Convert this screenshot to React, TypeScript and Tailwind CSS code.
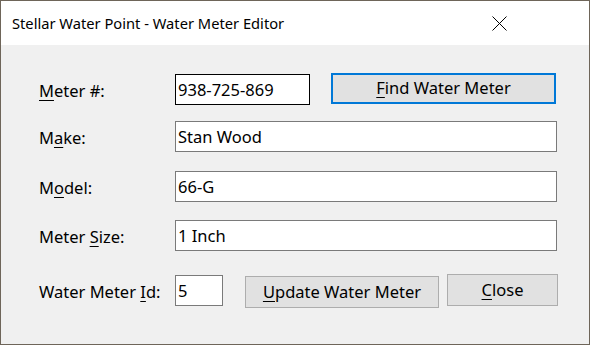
import React from 'react';

const font = { fontFamily: '"Noto Sans", "Open Sans", Arial, sans-serif' };

function Label({ pre, key_, post }: { pre: string; key_: string; post: string }) {
  return (
    <div className="h-[31px] w-[136px] shrink-0 pt-[1px] text-[16.5px] leading-[31px] text-black">
      {pre}
      <span className="underline underline-offset-[3px]">{key_}</span>
      {post}
    </div>
  );
}

function Field({ value, className = '' }: { value: string; className?: string }) {
  return (
    <div
      className={`h-[31px] shrink-0 border border-[#7a7a7a] bg-white pl-[2px] text-[16.5px] leading-[30px] text-black ${className}`}
    >
      {value}
    </div>
  );
}

export default function App() {
  return (
    <div className="w-[590px] h-[345px] overflow-hidden border border-[#6e6559] bg-[#f0f0f0]" style={font}>
      {/* title bar */}
      <div className="flex h-[44px] items-center justify-between bg-white pl-[11px] pr-[82px]">
        <span className="text-[14.7px] text-black">Stellar Water Point - Water Meter Editor</span>
        <svg width="15" height="15" viewBox="0 0 15 15">
          <path d="M0.5 0.5 L14.5 14.5 M14.5 0.5 L0.5 14.5" stroke="#000" strokeWidth="1" />
        </svg>
      </div>

      <div className="flex flex-col pl-[38px] pt-[29px]">
        <div className="flex h-[31px] items-start">
          <Label pre="" key_="M" post="eter #:" />
          <Field value="938-725-869" className="w-[135px] border-black" />
          <button className="ml-[21px] -mt-[1px] h-[31px] w-[225px] border-2 border-[#0078d7] bg-[#e1e1e1] text-[16.5px] text-black">
            <span className="underline underline-offset-[3px]">F</span>ind Water Meter
          </button>
        </div>

        <div className="mt-[16px] flex h-[31px] items-start">
          <Label pre="M" key_="a" post="ke:" />
          <Field value="Stan Wood" className="w-[382px]" />
        </div>

        <div className="mt-[19px] flex h-[31px] items-start">
          <Label pre="M" key_="o" post="del:" />
          <Field value="66-G" className="w-[382px]" />
        </div>

        <div className="mt-[18px] flex h-[31px] items-start">
          <Label pre="Meter " key_="S" post="ize:" />
          <Field value="1 Inch" className="w-[382px]" />
        </div>

        <div className="mt-[23px] flex items-start">
          <div className="mt-[1px]">
            <Label pre="Water Meter " key_="I" post="d:" />
          </div>
          <Field value="5" className="mt-[1px] w-[48px]" />
          <button className="ml-[22px] mt-[2px] h-[32px] w-[194px] border border-[#adadad] bg-[#e1e1e1] text-[16.5px] text-black">
            <span className="underline underline-offset-[3px]">U</span>pdate Water Meter
          </button>
          <button className="ml-[8px] h-[32px] w-[111px] border border-[#adadad] bg-[#e1e1e1] text-[16.5px] text-black">
            <span className="underline underline-offset-[3px]">C</span>lose
          </button>
        </div>
      </div>
    </div>
  );
}
